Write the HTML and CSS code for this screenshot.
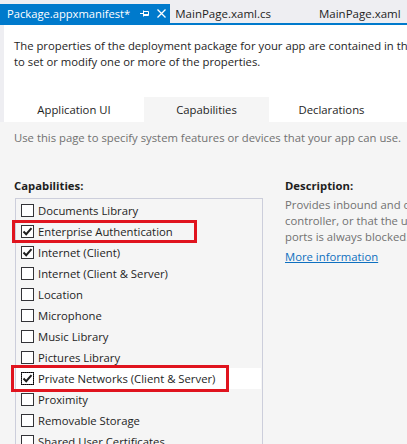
FILE: index.html
```html
<!DOCTYPE html>
<html>
<head>
<meta charset="utf-8">
<link rel="stylesheet" href="styles.css">
</head>
<body>
<div class="screen">
  <div class="docstrip">
    <div class="doctab active">
      <span class="doctab-name">Package.appxmanifest*</span>
      <svg class="pin" width="9" height="9" viewBox="0 0 9 9"><path d="M0 4.5H3M3.5 1.5V7.5M3.5 2.5H8.5V6.5H3.5" fill="none" stroke="#fff" stroke-width="1"/><path d="M4 5.5H8" stroke="#fff" stroke-width="1"/></svg>
      <svg class="close" width="9" height="9" viewBox="0 0 9 9"><path d="M0.5 0.5L8.5 8.5M8.5 0.5L0.5 8.5" stroke="#fff" stroke-width="1.3"/></svg>
    </div>
    <div class="doctab">MainPage.xaml.cs</div>
    <div class="doctab wide">MainPage.xaml</div>
  </div>
  <div class="page">
    <p class="intro">The properties of the deployment package for your app are contained in the app manifest file. You can use the Manifest Designer<br>to set or modify one or more of the properties.</p>
    <div class="subtabs">
      <div class="subtab first">Application UI</div>
      <div class="subtab selected">Capabilities</div>
      <div class="subtab">Declarations</div>
      <div class="subtab">Content URIs</div>
    </div>
    <div class="content">
      <p class="hint">Use this page to specify system features or devices that your app can use.</p>
      <div class="columns">
        <div class="caps">
          <div class="heading">Capabilities:</div>
          <ul class="list">
            <li class="row"><span class="box"></span>Documents Library</li>
            <li class="row"><span class="box checked"><svg width="11" height="11" viewBox="0 0 11 11"><path d="M1.5 5.5L4.2 8.2L9.5 2.2" fill="none" stroke="#1e1e1e" stroke-width="2"/></svg></span>Enterprise Authentication</li>
            <li class="row"><span class="box checked"><svg width="11" height="11" viewBox="0 0 11 11"><path d="M1.5 5.5L4.2 8.2L9.5 2.2" fill="none" stroke="#1e1e1e" stroke-width="2"/></svg></span>Internet (Client)</li>
            <li class="row"><span class="box"></span>Internet (Client &amp; Server)</li>
            <li class="row"><span class="box"></span>Location</li>
            <li class="row"><span class="box"></span>Microphone</li>
            <li class="row"><span class="box"></span>Music Library</li>
            <li class="row"><span class="box"></span>Pictures Library</li>
            <li class="row current"><span class="box checked focus"><svg width="11" height="11" viewBox="0 0 11 11"><path d="M1.5 5.5L4.2 8.2L9.5 2.2" fill="none" stroke="#1e1e1e" stroke-width="2"/></svg></span>Private Networks (Client &amp; Server)</li>
            <li class="row"><span class="box"></span>Proximity</li>
            <li class="row"><span class="box"></span>Removable Storage</li>
            <li class="row"><span class="box"></span>Shared User Certificates</li>
          </ul>
        </div>
        <div class="desc">
          <div class="heading">Description:</div>
          <p class="desc-text">Provides inbound and outbound access to the network through the firewall when a domain<br>controller, or that the user has designated as home or work. Inbound access to critical<br>ports is always blocked.</p>
          <a class="more" href="#">More information</a>
        </div>
      </div>
    </div>
  </div>
  <div class="mark mark-enterprise"></div>
  <div class="mark mark-private"></div>
</div>
</body>
</html>
```

FILE: styles.css
```css
html, body {
  margin: 0;
  padding: 0;
}
body {
  width: 407px;
  height: 444px;
  overflow: hidden;
  font-family: "Open Sans", "Noto Sans", sans-serif;
  font-size: 11.3px;
  color: #1e1e1e;
  background: #f5f5f5;
}
.screen {
  position: relative;
  width: 407px;
  height: 444px;
  overflow: hidden;
}
.docstrip {
  display: flex;
  height: 19px;
  padding-top: 4px;
  background: #eeeef2;
  border-bottom: 2px solid #007acc;
  white-space: nowrap;
}
.doctab {
  display: flex;
  align-items: center;
  height: 19px;
  padding: 0 6px 0 5px;
  line-height: 19px;
  color: #1e1e1e;
  font-size: 11.5px;
}
.doctab.active {
  background: #007acc;
  color: #fff;
  padding: 0 4px 0 7px;
  font-size: 11.2px;
}
.doctab.wide {
  padding-left: 42px;
}
.doctab-name {
  margin-right: 10px;
}
.pin {
  margin-right: 8px;
}
.page {
  background: #fff;
  border-left: 4px solid #eeeef2;
}
.intro {
  margin: 0;
  padding: 13px 0 0 10px;
  line-height: 16px;
  white-space: nowrap;
}
.subtabs {
  display: flex;
  margin-top: 27px;
  height: 25px;
  white-space: nowrap;
}
.subtab {
  width: 125px;
  flex: none;
  text-align: center;
  line-height: 25px;
}
.subtab.first {
  width: 140px;
}
.subtab.selected {
  background: #f5f5f5;
}
.content {
  background: #f5f5f5;
  margin-left: -4px;
  padding-left: 14px;
  height: 330px;
}
.hint {
  margin: 0;
  padding-top: 8px;
  line-height: 16px;
  color: #717171;
  white-space: nowrap;
}
.columns {
  display: flex;
  gap: 22px;
  margin-top: 32px;
}
.caps {
  width: 249px;
  flex: none;
}
.heading {
  font-weight: bold;
  line-height: 16px;
}
.list {
  list-style: none;
  margin: 4px 0 0 1px;
  padding: 1px 1px 0 0;
  border: 1px solid #cccedb;
  height: 262px;
}
.row {
  display: flex;
  align-items: center;
  height: 21px;
  padding-left: 5px;
  white-space: nowrap;
}
.row.current {
  background: #fff;
}
.box {
  width: 11px;
  height: 11px;
  border: 1px solid #333337;
  background: #fff;
  margin-right: 4px;
  display: flex;
  align-items: center;
  justify-content: center;
  flex: none;
}
.box.focus {
  outline: 1px dotted #000;
  outline-offset: -1px;
}
.desc {
  flex: none;
  width: 600px;
}
.desc-text {
  margin: 3px 0 0 0;
  line-height: 16px;
  color: #717171;
  white-space: nowrap;
}
.more {
  display: inline-block;
  margin-top: 4px;
  color: #0e70c0;
  text-decoration: underline;
  line-height: 16px;
}
.mark {
  position: absolute;
  border: 3.5px solid #e0141e;
  box-sizing: border-box;
}
.mark-enterprise {
  left: 12px;
  top: 220px;
  width: 185px;
  height: 23px;
}
.mark-private {
  left: 11px;
  top: 365px;
  width: 218px;
  height: 27px;
}
```
